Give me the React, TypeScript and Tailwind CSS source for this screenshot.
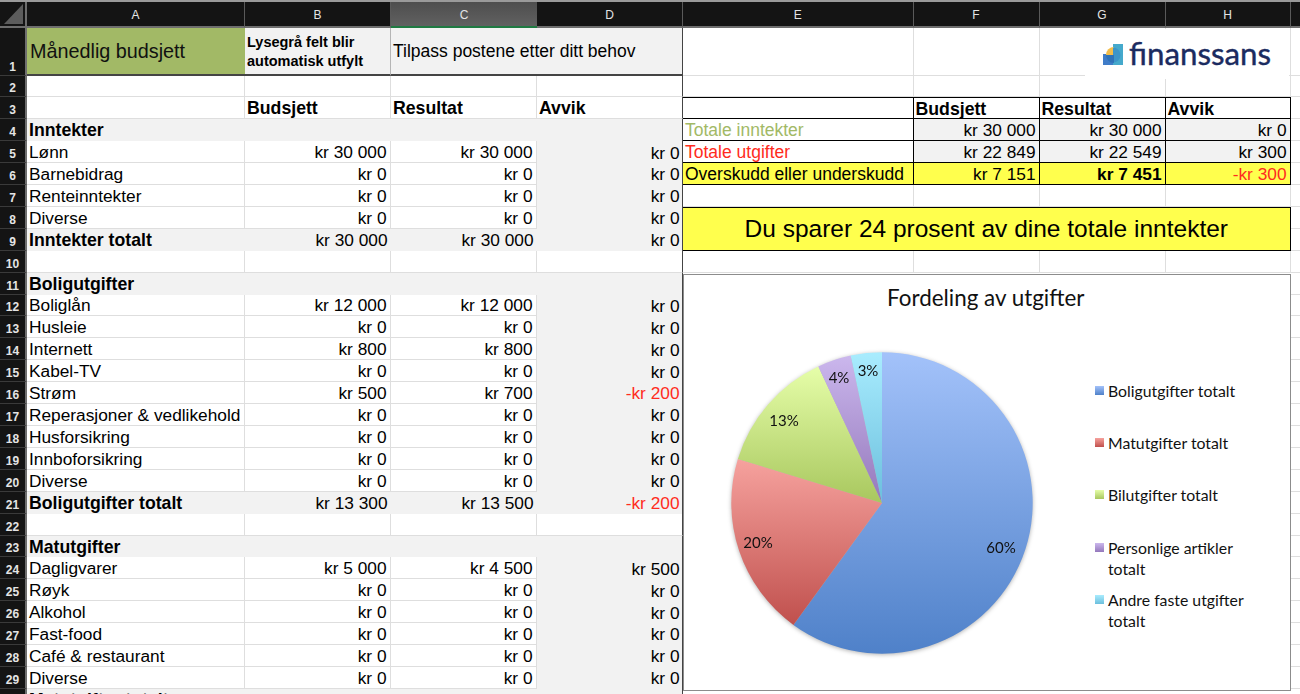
const colLabels = ["A", "B", "C", "D", "E", "F", "G", "H"];

type RowData = {
  n: number;
  label?: string;
  b?: string;
  c?: string;
  d?: string;
  kind?: "head" | "total" | "blank";
  red?: boolean;
};

const rows: RowData[] = [
  { n: 2, kind: "blank" },
  { n: 3, b: "Budsjett", c: "Resultat", d: "Avvik" },
  { n: 4, label: "Inntekter", kind: "head" },
  { n: 5, label: "Lønn", b: "kr 30 000", c: "kr 30 000", d: "kr 0" },
  { n: 6, label: "Barnebidrag", b: "kr 0", c: "kr 0", d: "kr 0" },
  { n: 7, label: "Renteinntekter", b: "kr 0", c: "kr 0", d: "kr 0" },
  { n: 8, label: "Diverse", b: "kr 0", c: "kr 0", d: "kr 0" },
  { n: 9, label: "Inntekter totalt", b: "kr 30 000", c: "kr 30 000", d: "kr 0", kind: "total" },
  { n: 10, kind: "blank" },
  { n: 11, label: "Boligutgifter", kind: "head" },
  { n: 12, label: "Boliglån", b: "kr 12 000", c: "kr 12 000", d: "kr 0" },
  { n: 13, label: "Husleie", b: "kr 0", c: "kr 0", d: "kr 0" },
  { n: 14, label: "Internett", b: "kr 800", c: "kr 800", d: "kr 0" },
  { n: 15, label: "Kabel-TV", b: "kr 0", c: "kr 0", d: "kr 0" },
  { n: 16, label: "Strøm", b: "kr 500", c: "kr 700", d: "-kr 200", red: true },
  { n: 17, label: "Reperasjoner & vedlikehold", b: "kr 0", c: "kr 0", d: "kr 0" },
  { n: 18, label: "Husforsikring", b: "kr 0", c: "kr 0", d: "kr 0" },
  { n: 19, label: "Innboforsikring", b: "kr 0", c: "kr 0", d: "kr 0" },
  { n: 20, label: "Diverse", b: "kr 0", c: "kr 0", d: "kr 0" },
  { n: 21, label: "Boligutgifter totalt", b: "kr 13 300", c: "kr 13 500", d: "-kr 200", kind: "total", red: true },
  { n: 22, kind: "blank" },
  { n: 23, label: "Matutgifter", kind: "head" },
  { n: 24, label: "Dagligvarer", b: "kr 5 000", c: "kr 4 500", d: "kr 500" },
  { n: 25, label: "Røyk", b: "kr 0", c: "kr 0", d: "kr 0" },
  { n: 26, label: "Alkohol", b: "kr 0", c: "kr 0", d: "kr 0" },
  { n: 27, label: "Fast-food", b: "kr 0", c: "kr 0", d: "kr 0" },
  { n: 28, label: "Café & restaurant", b: "kr 0", c: "kr 0", d: "kr 0" },
  { n: 29, label: "Diverse", b: "kr 0", c: "kr 0", d: "kr 0" },
  { n: 30, label: "Matutgifter totalt", b: "kr 5 000", c: "kr 4 500", d: "kr 500", kind: "total" },
];

const grid = "border-r-[1.5px] border-b-[1.5px] border-[#dedede]";
const edge = "border-b-[1.5px] border-[#dedede]";

function Cell({ className = "", children }: { className?: string; children?: React.ReactNode }) {
  return (
    <div className={`flex items-center overflow-hidden whitespace-nowrap pt-[2px] pr-[3px] pl-[2px] leading-none ${className}`}>
      {children}
    </div>
  );
}

function RowNum({ n }: { n: number }) {
  return (
    <div className="flex items-end justify-center border-r-2 border-b border-r-[#6e6e6e] border-b-[#3a3a3a] bg-[#141414] pb-[2px] text-[12px] font-bold leading-none text-[#e4e4e4]">
      {n}
    </div>
  );
}

function Sheet() {
  return (
    <div className="grid grid-cols-[27px_218px_146px_146px_146px_230.5px_126px_126px_125px_9.5px] grid-rows-[26px_47.5px_repeat(30,21.92px)]">
      {/* column headers */}
      <div className="relative border-r-2 border-b-2 border-[#6e6e6e] bg-[#141414]">
        <div className="absolute right-[2px] bottom-[2px] h-[20px] w-[19px] bg-[#5c5c5c] [clip-path:polygon(100%_0,100%_100%,0_100%)]" />
      </div>
      {colLabels.map((c) => (
        <div
          key={c}
          className={
            c === "C"
              ? "flex items-center justify-center border-b-2 border-[#1f7a42] bg-linear-to-b from-[#4e4e4e] to-[#616161] pt-[2px] text-[12px] text-[#e4e4e4]"
              : "flex items-center justify-center border-r border-b-2 border-r-[#5a5a5a] border-b-[#6e6e6e] bg-[#141414] pt-[2px] text-[12px] text-[#e4e4e4]"
          }
        >
          {c}
        </div>
      ))}
      <div className="border-b-2 border-[#6e6e6e] bg-[#141414]" />

      {/* row 1 */}
      <RowNum n={1} />
      <Cell className="border-b-2 border-[#444] bg-[#a2b966] pl-[3px]! text-[19.8px] text-[#111]">Månedlig budsjett</Cell>
      <div className="flex flex-col justify-center border-r border-b-2 border-r-[#b5b5b5] border-b-[#444] bg-[#f2f2f2] pt-[2px] pl-[2px] text-[14.5px] leading-[19px] font-bold whitespace-nowrap">
        <span>Lysegrå felt blir</span>
        <span>automatisk utfylt</span>
      </div>
      <Cell className="col-span-2 border-r-[1.5px] border-b-2 border-[#444] bg-[#f2f2f2] text-[17.5px]">Tilpass postene etter ditt behov</Cell>
      <div className={grid} />
      <div className={grid} />
      <div className={grid} />
      <div className={grid} />
      <div className={edge} />

      {rows.map((r) => (
        <SheetRow key={r.n} r={r} />
      ))}
    </div>
  );
}

function RightCells({ n }: { n: number }) {
  const black = "border-r border-b border-black text-[17.3px]";
  const label = "border-r border-b border-black text-[17.5px]";
  if (n === 3) {
    return (
      <>
        <div className="border-y border-r border-black" />
        <Cell className="border-y border-r border-black text-[17.7px] font-bold">Budsjett</Cell>
        <Cell className="border-y border-r border-black text-[17.7px] font-bold">Resultat</Cell>
        <Cell className="border-y border-r border-black text-[17.7px] font-bold">Avvik</Cell>
        <div className={edge} />
      </>
    );
  }
  if (n === 4 || n === 5) {
    const vals = n === 4 ? ["kr 30 000", "kr 30 000", "kr 0"] : ["kr 22 849", "kr 22 549", "kr 300"];
    return (
      <>
        <Cell className={`${label} ${n === 4 ? "text-[#a2b966]" : "text-[#ff2b20]"}`}>
          {n === 4 ? "Totale inntekter" : "Totale utgifter"}
        </Cell>
        {vals.map((v, i) => (
          <Cell key={i} className={`${black} justify-end bg-[#f2f2f2]`}>
            {v}
          </Cell>
        ))}
        <div className={edge} />
      </>
    );
  }
  if (n === 6) {
    return (
      <>
        <Cell className={`${label} bg-[#ffff4d]`}>Overskudd eller underskudd</Cell>
        <Cell className={`${black} justify-end bg-[#ffff4d]`}>kr 7 151</Cell>
        <Cell className={`${black} justify-end bg-[#ffff4d] font-bold`}>kr 7 451</Cell>
        <Cell className={`${black} justify-end bg-[#ffff4d] text-[#ff2b20]`}>-kr 300</Cell>
        <div className={edge} />
      </>
    );
  }
  if (n === 8) {
    return (
      <>
        <div className="col-span-4 row-span-2 flex items-center justify-center border border-l-0 border-black bg-[#ffff4d] pt-[1px] text-[24.5px] leading-none">
          Du sparer 24 prosent av dine totale inntekter
        </div>
        <div className={edge} />
      </>
    );
  }
  if (n === 11) {
    return (
      <>
        <div className="col-span-4 row-span-20">
          <Chart />
        </div>
        <div className={edge} />
      </>
    );
  }
  if (n === 9 || n > 11) {
    return <div className={edge} />;
  }
  return (
    <>
      <div className={grid} />
      <div className={grid} />
      <div className={grid} />
      <div className={grid} />
      <div className={edge} />
    </>
  );
}

function SheetRow({ r }: { r: RowData }) {
  const shaded = r.kind === "head" || r.kind === "total";
  const base = shaded ? "bg-[#f2f2f2]" : grid;
  const dBg = r.n === 3 || r.kind === "blank" ? "" : "bg-[#f2f2f2]";
  const head = r.n === 3;
  const value = head ? "text-[17.7px] font-bold" : "justify-end pr-[3.5px]! text-[17.3px]";
  return (
    <>
      <RowNum n={r.n} />
      <Cell className={`${base} ${shaded ? "text-[17.7px] font-bold" : "text-[17.3px]"}`}>{r.label}</Cell>
      <Cell className={`${base} ${value}`}>{r.b}</Cell>
      <Cell className={`${base} ${value}`}>{r.c}</Cell>
      <Cell
        className={`border-r-[1.5px] border-r-[#444] ${dBg} ${head ? "text-[17.7px] font-bold" : "justify-end pr-[2.5px]! text-[17.3px]"} ${r.red ? "text-[#ff2b20]" : ""} ${r.kind === "blank" || head ? "border-b-[1.5px] border-b-[#dedede]" : ""}`}
      >
        {r.d}
      </Cell>
      <RightCells n={r.n} />
    </>
  );
}

const slices = [
  { id: "blue", from: 0, to: 216, top: "#a3c2fa", bottom: "#4f81c9" },
  { id: "red", from: 216, to: 287, top: "#f6a29e", bottom: "#c0504d" },
  { id: "green", from: 287, to: 335, top: "#e6fea9", bottom: "#a8c75e" },
  { id: "purple", from: 335, to: 348, top: "#cbb7ed", bottom: "#9478bb" },
  { id: "cyan", from: 348, to: 360, top: "#a9ecfe", bottom: "#6bbfdd" },
];

const cx = 198;
const cy = 176;
const radius = 150.7;

function point(deg: number) {
  const a = (deg * Math.PI) / 180;
  return `${(cx + radius * Math.sin(a)).toFixed(2)} ${(cy - radius * Math.cos(a)).toFixed(2)}`;
}

function Chart() {
  const legend = [
    { label: ["Boligutgifter totalt"], swatch: "from-[#a3c2fa] to-[#4f81c9]", h: "h-[52.3px]" },
    { label: ["Matutgifter totalt"], swatch: "from-[#f6a29e] to-[#c0504d]", h: "h-[52.3px]" },
    { label: ["Bilutgifter totalt"], swatch: "from-[#e6fea9] to-[#a8c75e]", h: "h-[52.3px]" },
    { label: ["Personlige artikler", "totalt"], swatch: "from-[#cbb7ed] to-[#9478bb]", h: "h-[52.3px]" },
    { label: ["Andre faste utgifter", "totalt"], swatch: "from-[#a9ecfe] to-[#6bbfdd]", h: "" },
  ];
  return (
    <div className="mt-[1px] flex h-[417px] flex-col border border-[#8c8c8c] bg-white font-['Lato',sans-serif] text-[#111]">
      <div className="flex h-[52px] shrink-0 items-center justify-center pr-[2px] pb-[4px] text-[22.4px] leading-none">
        Fordeling av utgifter
      </div>
      <div className="flex">
        <svg width="405" height="363" viewBox="0 0 405 363" className="shrink-0 drop-shadow-[0_1px_2px_rgba(0,0,0,0.3)]">
          <defs>
            {slices.map((s) => (
              <linearGradient key={s.id} id={s.id} x1="0" y1="0" x2="0" y2="1">
                <stop offset="0" stopColor={s.top} />
                <stop offset="1" stopColor={s.bottom} />
              </linearGradient>
            ))}
          </defs>
          {slices.map((s) => (
            <path
              key={s.id}
              fill={`url(#${s.id})`}
              d={`M${cx} ${cy} L${point(s.from)} A${radius} ${radius} 0 ${s.to - s.from > 180 ? 1 : 0} 1 ${point(s.to === 360 ? 359.99 : s.to)} Z`}
            />
          ))}
          <g fontSize="15" textAnchor="middle" dominantBaseline="central" fill="#111">
            <text x="317" y="220">60%</text>
            <text x="74" y="215">20%</text>
            <text x="100" y="93">13%</text>
            <text x="155" y="50">4%</text>
            <text x="184" y="43">3%</text>
          </g>
        </svg>
        <div className="flex flex-col pt-[53px] pl-[6px] text-[15.8px] leading-[21px]">
          {legend.map((l) => (
            <div key={l.label[0]} className={`flex items-start gap-[4px] ${l.h}`}>
              <span className={`mt-[6px] h-[9px] w-[9px] shrink-0 bg-linear-to-b ${l.swatch}`} />
              <span className="flex flex-col whitespace-nowrap">
                {l.label.map((t) => (
                  <span key={t}>{t}</span>
                ))}
              </span>
            </div>
          ))}
        </div>
      </div>
    </div>
  );
}

function Logo() {
  return (
    <div className="absolute top-[27px] left-[1085px] flex h-[50px] w-[204px] items-center gap-[6px] bg-white pb-[1px] pl-[18px]">
      <svg width="20" height="21" viewBox="0 0 20 21" className="mt-[2px] shrink-0">
        <rect x="0" y="10" width="20" height="11" fill="#3f7cc8" />
        <rect x="10" y="0" width="10" height="21" fill="#45a9cc" />
        <path d="M3 11 A8 8 0 0 1 11 3 V11 Z" fill="#f2bd4a" />
        <path d="M10 3.5 A7.5 7.5 0 0 1 10 18.5 Z" fill="#3c95c9" />
        <path d="M3 11 A8 8 0 0 0 11 19 V11 Z" fill="#2f73b8" />
      </svg>
      <span className="font-['Lato',sans-serif] text-[31.3px] leading-none text-[#1b2b60] [-webkit-text-stroke:0.4px_#1b2b60]">
        finanssans
      </span>
    </div>
  );
}

export default function App() {
  return (
    <div className="relative h-[694px] w-[1300px] overflow-hidden border-t-2 border-[#9a9a9a] bg-white font-['Liberation_Sans',Arial,sans-serif] text-black">
      <Sheet />
      <Logo />
    </div>
  );
}
